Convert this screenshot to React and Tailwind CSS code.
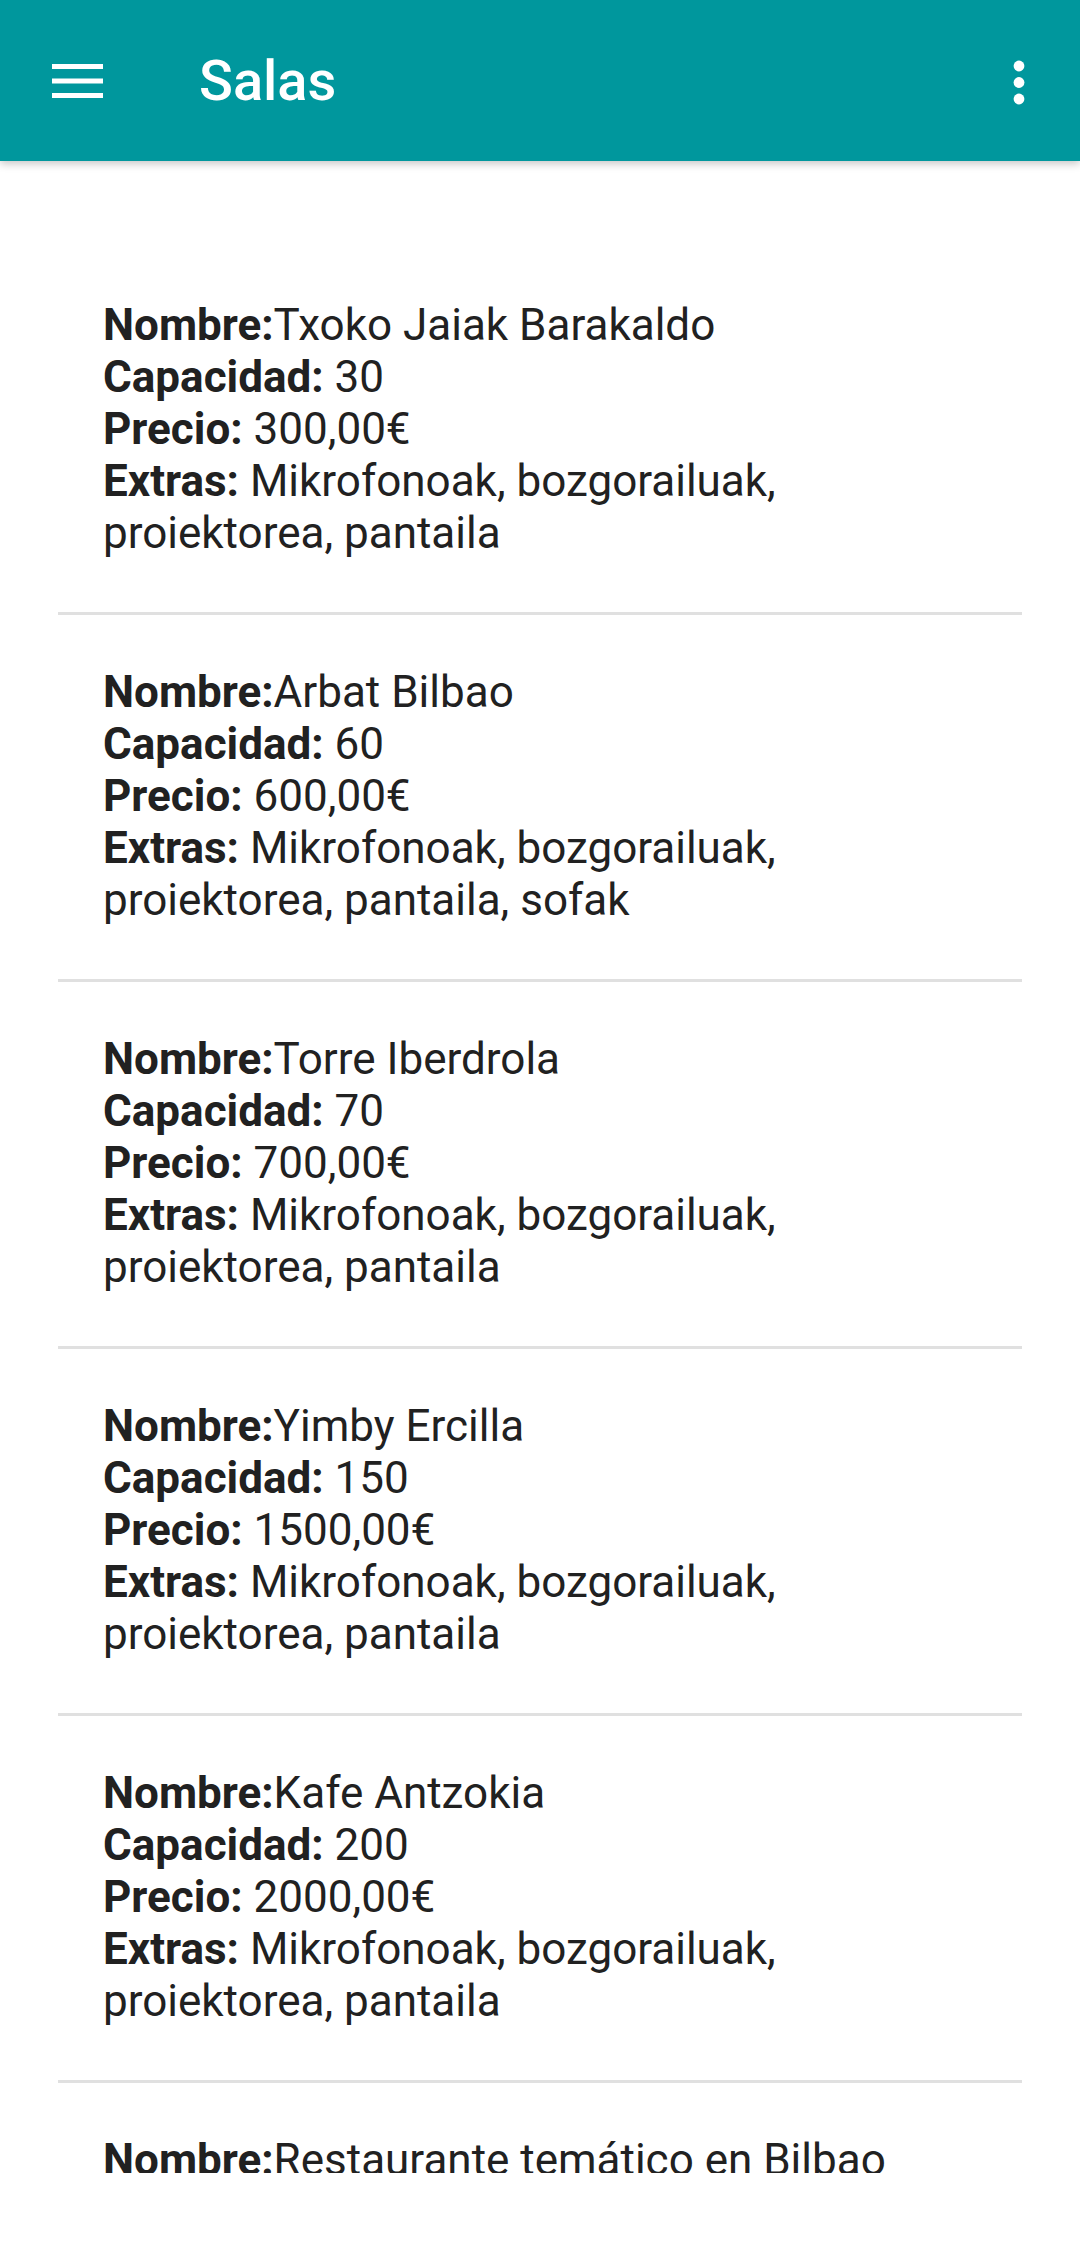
const salas = [
  {
    nombre: "Txoko Jaiak Barakaldo",
    capacidad: "30",
    precio: "300,00€",
    extras: "Mikrofonoak, bozgorailuak, proiektorea, pantaila",
  },
  {
    nombre: "Arbat Bilbao",
    capacidad: "60",
    precio: "600,00€",
    extras: "Mikrofonoak, bozgorailuak, proiektorea, pantaila, sofak",
  },
  {
    nombre: "Torre Iberdrola",
    capacidad: "70",
    precio: "700,00€",
    extras: "Mikrofonoak, bozgorailuak, proiektorea, pantaila",
  },
  {
    nombre: "Yimby Ercilla",
    capacidad: "150",
    precio: "1500,00€",
    extras: "Mikrofonoak, bozgorailuak, proiektorea, pantaila",
  },
  {
    nombre: "Kafe Antzokia",
    capacidad: "200",
    precio: "2000,00€",
    extras: "Mikrofonoak, bozgorailuak, proiektorea, pantaila",
  },
  {
    nombre: "Restaurante temático en Bilbao",
    capacidad: "250",
    precio: "2500,00€",
    extras: "Mikrofonoak, bozgorailuak, proiektorea, pantaila",
  },
];

const MenuIcon = () => (
  <svg width="51" height="34" viewBox="0 0 51 34" fill="#ffffff">
    <rect x="0" y="0" width="51" height="5" />
    <rect x="0" y="14.5" width="51" height="5" />
    <rect x="0" y="29" width="51" height="5" />
  </svg>
);

const MoreIcon = () => (
  <svg width="12" height="45" viewBox="0 0 12 45" fill="#ffffff">
    <circle cx="6" cy="6" r="5.4" />
    <circle cx="6" cy="22.5" r="5.4" />
    <circle cx="6" cy="39" r="5.4" />
  </svg>
);

const SalaItem = ({ sala }) => {
  return (
    <li className="mx-[58px] border-b-[3px] border-[#e0e0e0] pt-[51px] pb-[53px] pl-[45px] pr-[80px]">
      <p className="text-[44px] leading-[52px] text-[#212121]">
        <span className="font-bold">Nombre:</span>
        {sala.nombre}
      </p>
      <p className="text-[44px] leading-[52px] text-[#212121]">
        <span className="font-bold">Capacidad:</span> {sala.capacidad}
      </p>
      <p className="text-[44px] leading-[52px] text-[#212121]">
        <span className="font-bold">Precio:</span> {sala.precio}
      </p>
      <p className="text-[44px] leading-[52px] text-[#212121]">
        <span className="font-bold">Extras:</span> {sala.extras}
      </p>
    </li>
  );
};

const App = () => {
  return (
    <div
      className="w-[1080px] h-[2258px] bg-white flex flex-col"
      style={{ fontFamily: "Roboto, 'Noto Sans', sans-serif" }}
    >
      <header className="relative z-10 h-[161px] shrink-0 bg-[#00979d] flex items-center shadow-[0_3px_8px_rgba(0,0,0,0.22)]">
        <div className="pl-[52px] flex items-center">
          <MenuIcon />
        </div>
        <h1 className="ml-[96px] text-[56px] leading-none font-medium text-white">
          Salas
        </h1>
        <div className="ml-auto mr-[55px] flex items-center pt-[3px]">
          <MoreIcon />
        </div>
      </header>
      <div className="h-[2012px] overflow-hidden">
        <ul className="pt-[87px]">
          {salas.map((sala) => (
            <SalaItem key={sala.nombre} sala={sala} />
          ))}
        </ul>
      </div>
    </div>
  );
};

export default App;
